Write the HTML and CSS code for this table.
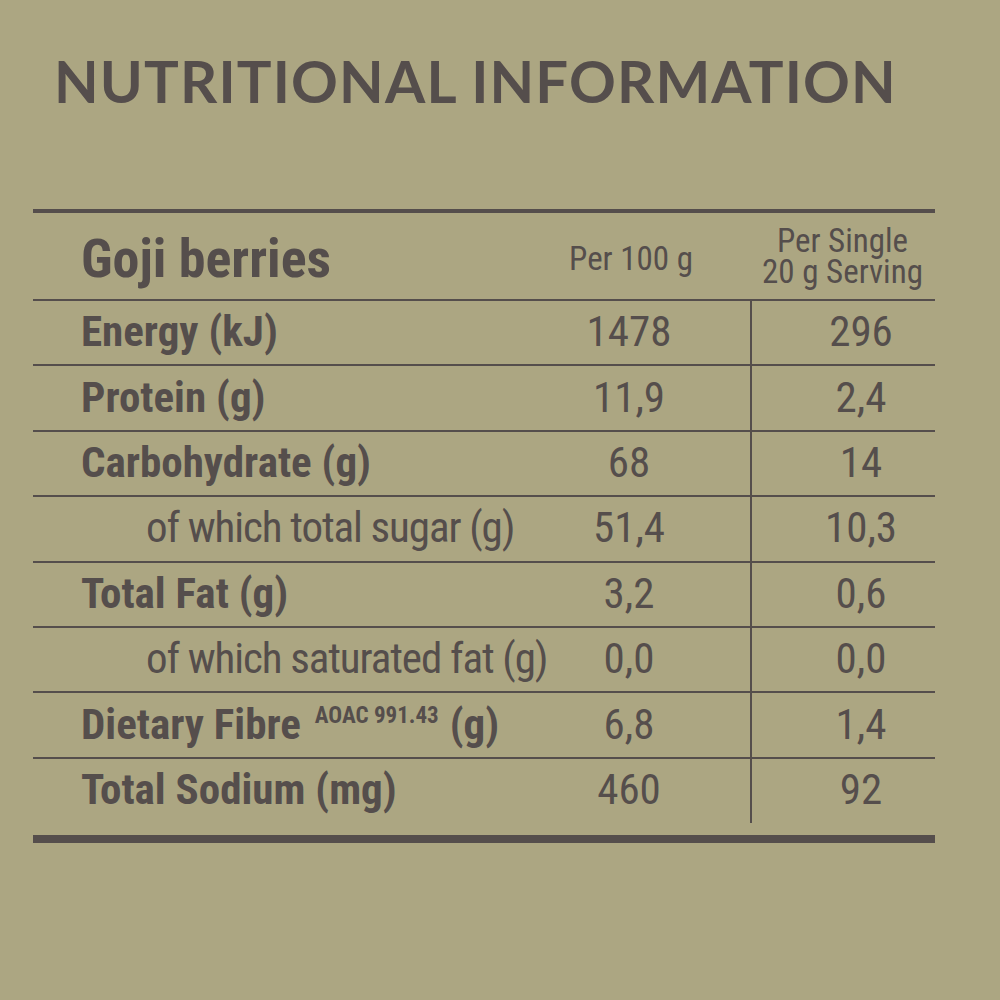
FILE: index.html
```html
<!DOCTYPE html>
<html lang="en">
<head>
<meta charset="utf-8">
<title>Nutritional Information</title>
<link rel="stylesheet" href="styles.css">
</head>
<body>
<main class="page">
  <h1 class="title">NUTRITIONAL INFORMATION</h1>
  <section class="facts">
    <div class="row head">
      <div class="cell label product">Goji berries</div>
      <div class="cell col-100 head-text">Per 100 g</div>
      <div class="cell col-serv head-text">
        <div class="head-lines">
          <span class="head-line">Per Single</span>
          <span class="head-line">20 g Serving</span>
        </div>
      </div>
    </div>
    <div class="row">
      <div class="cell label">Energy (kJ)</div>
      <div class="cell col-100">1478</div>
      <div class="cell col-serv">296</div>
    </div>
    <div class="row">
      <div class="cell label">Protein (g)</div>
      <div class="cell col-100">11,9</div>
      <div class="cell col-serv">2,4</div>
    </div>
    <div class="row">
      <div class="cell label">Carbohydrate (g)</div>
      <div class="cell col-100">68</div>
      <div class="cell col-serv">14</div>
    </div>
    <div class="row">
      <div class="cell label sub">of which total sugar (g)</div>
      <div class="cell col-100">51,4</div>
      <div class="cell col-serv">10,3</div>
    </div>
    <div class="row">
      <div class="cell label">Total Fat (g)</div>
      <div class="cell col-100">3,2</div>
      <div class="cell col-serv">0,6</div>
    </div>
    <div class="row">
      <div class="cell label sub">of which saturated fat (g)</div>
      <div class="cell col-100">0,0</div>
      <div class="cell col-serv">0,0</div>
    </div>
    <div class="row">
      <div class="cell label">Dietary Fibre <sup class="method">AOAC 991.43</sup> (g)</div>
      <div class="cell col-100">6,8</div>
      <div class="cell col-serv">1,4</div>
    </div>
    <div class="row last">
      <div class="cell label">Total Sodium (mg)</div>
      <div class="cell col-100">460</div>
      <div class="cell col-serv">92</div>
    </div>
  </section>
</main>
</body>
</html>
```

FILE: styles.css
```css
html, body {
  margin: 0;
  padding: 0;
  background: #aca682;
}

body {
  width: 1000px;
  height: 1000px;
  color: #554e4c;
}

.page {
  padding-top: 52px;
}

.title {
  margin: 0 0 0 54px;
  font-family: "Lato", "Noto Sans", sans-serif;
  font-weight: 700;
  font-size: 58px;
  line-height: 58px;
  letter-spacing: 1.15px;
  white-space: nowrap;
}

.facts {
  margin: 99px 0 0 33px;
  width: 902px;
  border-top: 4px solid #554e4c;
  border-bottom: 8px solid #554e4c;
  font-family: "Liberation Sans Narrow", "Roboto Condensed", "Liberation Sans", sans-serif;
}

.row {
  display: grid;
  grid-template-columns: 479px 238px 185px;
  height: 65.4px;
  box-sizing: border-box;
  border-top: 2px solid #554e4c;
}

.row.head {
  height: 86px;
  border-top: none;
}

.row.last {
  height: 78px;
  padding-bottom: 12px;
}

.cell {
  display: flex;
  align-items: center;
  font-size: 43px;
  line-height: 1;
  white-space: nowrap;
}

.label {
  font-weight: 700;
  padding-left: 48px;
  padding-bottom: 2px;
}

.label.sub {
  font-weight: 400;
  padding-left: 113px;
  letter-spacing: -1.1px;
}

.col-100 {
  justify-content: center;
  padding-bottom: 2px;
  padding-right: 4px;
}

.col-serv {
  justify-content: center;
  padding-left: 35px;
  padding-bottom: 2px;
  border-left: 2px solid #554e4c;
}

.row.head .col-serv {
  border-left: none;
  padding-left: 0;
}

.product {
  font-size: 54px;
  padding-top: 8px;
}

.head-text {
  font-size: 33px;
  text-align: center;
  padding-bottom: 0;
  padding-top: 0;
}

.head-lines {
  display: flex;
  flex-direction: column;
  align-items: center;
}

.head-line {
  display: block;
  line-height: 31px;
}

.row.head .col-100 {
  padding-top: 4px;
  padding-right: 0;
}

.method {
  font-size: 23px;
  font-weight: 700;
  align-self: flex-start;
  margin: 11px 11px 0 14px;
  line-height: 1;
  vertical-align: baseline;
}
```
